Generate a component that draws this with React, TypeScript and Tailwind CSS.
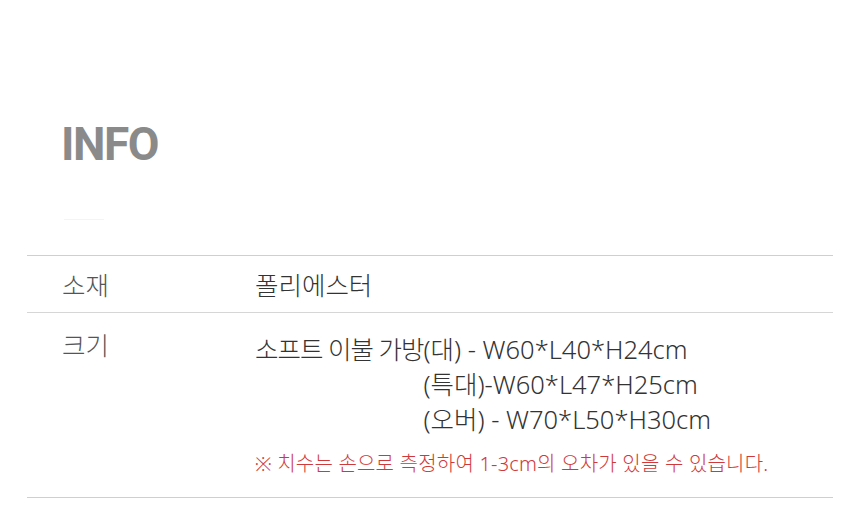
export default function App() {
  return (
    <div
      className="w-[860px] h-[507px] bg-white overflow-hidden"
      style={{ fontFamily: '"Noto Sans", "Noto Sans CJK KR", sans-serif' }}
    >
      <div className="pt-[114px] pl-[61px]">
        <h1
          className="text-[46px] leading-[60px] font-bold text-[#8a8a8a] tracking-[-1.5px]"
          style={{ fontFamily: 'Roboto, sans-serif' }}
        >
          INFO
        </h1>
      </div>
      <div className="ml-[64px] mt-[45px] w-[40px] h-px bg-[#f4f4f4]" />
      <div className="mx-[27px] mt-[35px] border-t border-[#cfcfcf]">
        <div className="flex h-[57px] items-center border-b border-[#d6d6d6] text-[25.5px] font-light">
          <div className="w-[228px] pl-[35px] pt-[2px] text-[#555]">소재</div>
          <div className="pt-[2px] text-[#333]">폴리에스터</div>
        </div>
        <div className="flex h-[185px] border-b border-[#cfcfcf] text-[25.5px] font-light">
          <div className="w-[228px] pl-[35px] pt-[13px] text-[#555]">크기</div>
          <div className="pt-[19px]">
            <div className="flex text-[#333] leading-[35px]">
              <div className="tracking-[-1px]">소프트 이불 가방</div>
              <div className="flex flex-col">
                <span>(대) - W60*L40*H24cm</span>
                <span>(특대)-W60*L47*H25cm</span>
                <span>(오버) - W70*L50*H30cm</span>
              </div>
            </div>
            <div className="mt-[12px] text-[20px] text-[#d0393b] tracking-[0.2px]">
              ※ 치수는 손으로 측정하여 1-3cm의 오차가 있을 수 있습니다.
            </div>
          </div>
        </div>
      </div>
    </div>
  );
}
